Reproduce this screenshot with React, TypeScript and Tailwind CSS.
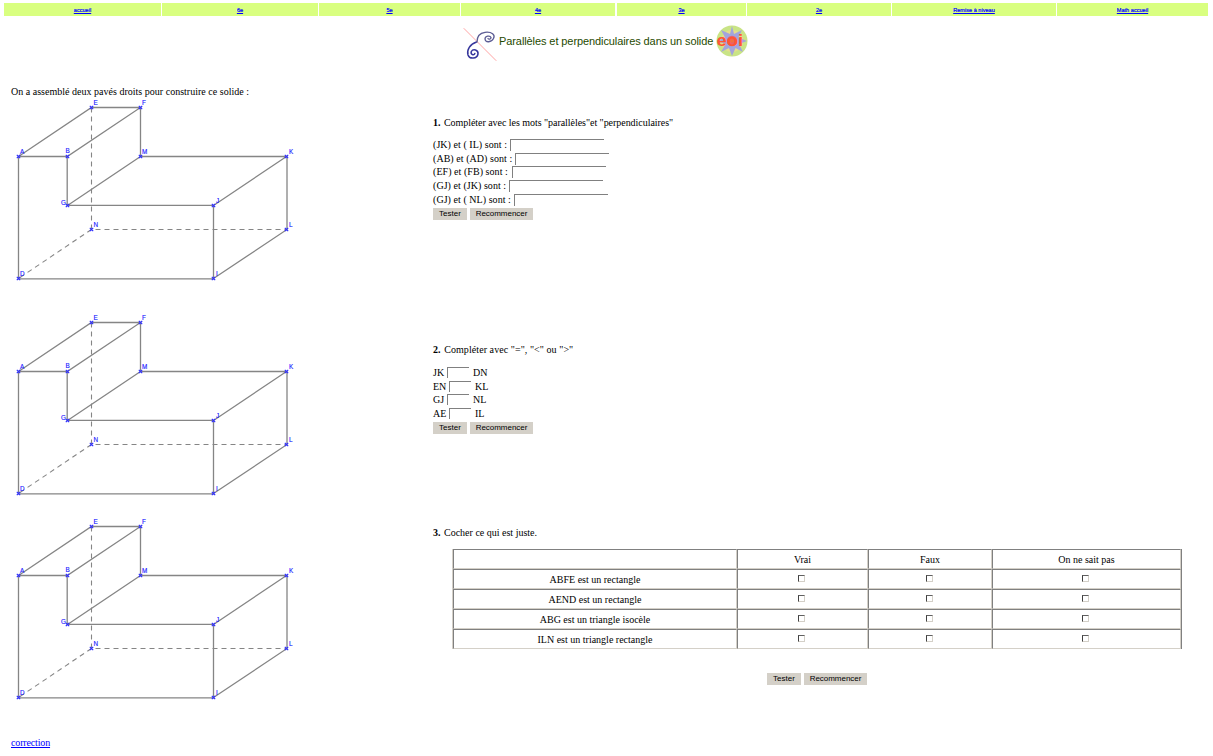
import React from "react";

type Point = { name: string; x: number; y: number; lx: number; ly: number };

const points: Point[] = [
  { name: "E", x: 91.5, y: 7.5, lx: 93.5, ly: 5 },
  { name: "F", x: 140.5, y: 7.5, lx: 142, ly: 5 },
  { name: "A", x: 18.5, y: 56.5, lx: 20, ly: 54 },
  { name: "B", x: 67.5, y: 56.5, lx: 65.5, ly: 53 },
  { name: "M", x: 140.5, y: 56.5, lx: 142, ly: 54.3 },
  { name: "K", x: 286.5, y: 56.5, lx: 289, ly: 54 },
  { name: "G", x: 67.5, y: 105.5, lx: 61, ly: 105 },
  { name: "J", x: 213.5, y: 105.5, lx: 216, ly: 103 },
  { name: "N", x: 91.5, y: 129.5, lx: 93.5, ly: 127 },
  { name: "L", x: 286.5, y: 129.5, lx: 289, ly: 127 },
  { name: "D", x: 18.5, y: 178.5, lx: 20, ly: 176 },
  { name: "I", x: 213.5, y: 178.5, lx: 216, ly: 176 },
];

function Solid() {
  return (
    <svg width="300" height="185" className="block">
      <g fill="none" stroke="#858585" strokeWidth="1.3">
        <path d="M18.5 56.5L91.5 7.5H140.5L67.2 56.5H18.5V178.8H213.5V105.4H67.2V56.5M140.5 7.5V56.5H287V129.5L213.5 178.5M67.5 105.5L140.5 56.5M213.5 105.5L286.5 56.5" />
        <path d="M91.5 7.5V129.5H286.5M91.5 129.5L18.5 178.5" strokeDasharray="5 4" strokeWidth="1.1" />
      </g>
      {points.map((p) => (
        <g key={p.name}>
          <path d={`M${p.x - 1.7} ${p.y - 1.7}l3.4 3.4m0 -3.4l-3.4 3.4`} stroke="#3030ff" strokeWidth="1.2" />
          <text x={p.lx} y={p.ly} className="fill-[#2020ff] font-['Liberation_Sans',sans-serif] text-[6.3px]" stroke="#2020ff" strokeWidth="0.15">
            {p.name}
          </text>
        </g>
      ))}
    </svg>
  );
}

function Buttons() {
  return (
    <div className="flex h-3 gap-[3px] font-['Liberation_Sans',sans-serif] text-[8px] leading-[12px]">
      <button className="h-3 w-[34px] bg-[#d4d0c8]">Tester</button>
      <button className="h-3 w-[63px] bg-[#d4d0c8] tracking-[-0.03px]">Recommencer</button>
    </div>
  );
}

function Title() {
  return (
    <div className="flex h-[38px] items-start pl-[463px]">
      <svg width="36" height="38" className="mt-[1px] block" fill="none" strokeLinecap="round">
        <path d="M1 2.5L33 34.5" stroke="#ffa3a3" strokeWidth="1" />
        <path d="M13.5 16C7 18 3.5 24 5 29C6.5 33.5 14 33 15 28C15.5 23.5 10 22.5 8.3 25.5C7.3 28.5 11 30 11.8 27.5" stroke="#36369c" strokeWidth="1.5" />
        <path d="M14 16C14 11 16 7 22 6.3C29 5.5 32.5 9 30.5 12.5C28.5 16.5 22.5 17 22 13C22 10 27 9 28 11.5C28 13.5 25.5 13.5 25 12.5" stroke="#5c5c94" strokeWidth="1.3" />
      </svg>
      <span className="mt-[10px] w-[217px] whitespace-nowrap font-['Liberation_Sans',sans-serif] text-[11px] leading-[13px] tracking-[-0.09px] text-[#1f4a00]">
        Parallèles et perpendiculaires dans un solide
      </span>
      <svg width="32" height="32" viewBox="0 0 32 32" className="block">
        <circle cx="16" cy="16" r="15.5" fill="#c9e486" />
        <circle cx="16" cy="16" r="11" fill="#e6dc8c" />
        <path d="M16 1L18 9L26 5L22.5 12.5L31 16L23 19L27 27L19.5 23L16 31L13 23L5 27L9.5 19L1 16L9 12.5L5 5L14 9Z" fill="#a3a4dc" />
        <circle cx="16" cy="16" r="5.2" fill="#e8606c" />
        <text x="0.5" y="21" textLength="26.5" lengthAdjust="spacingAndGlyphs" className="fill-[#ff5533] font-['Liberation_Sans',sans-serif] text-[17px] font-bold">eoi</text>
        <circle cx="16" cy="16" r="1.8" fill="#f2703c" />
      </svg>
    </div>
  );
}

const nav: [string, string][] = [
  ["accueil", "w-[157px]"],
  ["6e", "w-[156px]"],
  ["5e", "w-[141px]"],
  ["4e", "w-[154px]"],
  ["3e", "w-[129px] ml-px"],
  ["2e", "w-[144px]"],
  ["Remise à niveau", "w-[164px]"],
  ["Math accueil", "w-[151px]"],
];

const pairs: [string, string][] = [
  ["(JK) et ( IL) sont :", "w-[77px]"],
  ["(AB) et (AD) sont :", "w-[82px]"],
  ["(EF) et (FB) sont :", "w-[79px]"],
  ["(GJ) et (JK) sont :", "w-[76px]"],
  ["(GJ) et ( NL) sont :", "w-[81px]"],
];

const compare: [string, string, string][] = [
  ["JK", "DN", "w-[14px]"],
  ["EN", "KL", "w-[16px]"],
  ["GJ", "NL", "w-[14px]"],
  ["AE", "IL", "w-[16px]"],
];

const statements = ["ABFE est un rectangle", "AEND est un rectangle", "ABG est un triangle isocèle", "ILN est un triangle rectangle"];

const cell = "border border-t-[#808080] border-l-[#808080] border-b-[#d4d0c8] border-r-[#d4d0c8] p-0 pt-px";

export default function App() {
  return (
    <div className="flex h-[756px] w-[1213px] flex-col overflow-hidden bg-white font-['Liberation_Serif',serif] text-[10px] leading-[12px] text-black">
      <nav className="flex h-[25px] gap-px pl-1 pt-[3px] font-['Liberation_Sans',sans-serif] text-[5.6px]">
        {nav.map(([label, width]) => (
          <div key={label} className={`${width} h-[13px] bg-[#d9ff80] text-center leading-[14px]`}>
            <a href="#" className="text-[#0000ff] underline [-webkit-text-stroke:0.2px_#0000ff]">{label}</a>
          </div>
        ))}
      </nav>
      <Title />
      <main className="flex">
        <section className="w-[433px]">
          <p className="mt-[23px] h-[14px] whitespace-nowrap pl-[11px] tracking-[0.015px]">On a assemblé deux pavés droits pour construire ce solide :</p>
          <Solid />
          <div className="mt-[30px]"><Solid /></div>
          <div className="mt-[19px]"><Solid /></div>
          <a href="#" className="ml-[11px] mt-[33px] inline-block tracking-[-0.15px] text-[#0000ff] underline">correction</a>
        </section>
        <section className="w-[780px]">
          <p className="mt-[54px] h-[22px] tracking-[-0.04px]"><b className="mr-px">1.</b> Compléter avec les mots "parallèles"et "perpendiculaires"</p>
          <div className="h-[69px]">
            {pairs.map(([label, width]) => (
              <label key={label} className="flex h-[13.7px]">
                <span className={`${width} whitespace-nowrap tracking-[0.05px]`}>{label}</span>
                <input className="h-3 w-[94px] border-l border-t border-[#808080] outline-none" />
              </label>
            ))}
          </div>
          <Buttons />
          <p className="mt-[124px] h-[23px] tracking-[0.07px]"><b className="mr-px">2.</b> Compléter avec "=", "&lt;" ou "&gt;"</p>
          <div className="h-[55px]">
            {compare.map(([left, right, width]) => (
              <label key={left} className="flex h-[13.7px]">
                <span className={width}>{left}</span>
                <input className="mr-1 h-[11px] w-[22px] border-l border-t border-[#808080] outline-none" />
                <span>{right}</span>
              </label>
            ))}
          </div>
          <Buttons />
          <p className="mt-[93px] h-[22px]"><b className="mr-px">3.</b> Cocher ce qui est juste.</p>
          <table className="ml-[19px] w-[730px] table-fixed border-separate border-spacing-0 border border-b-0 border-l-[#d4d0c8] border-r-[#808080] border-t-0 text-center">
            <colgroup><col className="w-[284px]" /><col className="w-[131px]" /><col className="w-[124px]" /><col /></colgroup>
            <tbody>
              <tr className="h-5">
                <td className={cell} /><td className={cell}>Vrai</td><td className={cell}>Faux</td><td className={cell}>On ne sait pas</td>
              </tr>
              {statements.map((s) => (
                <tr key={s} className="h-5">
                  <td className={cell}>{s}</td>
                  {[0, 1, 2].map((i) => (
                    <td key={i} className={cell}>
                      <input type="checkbox" className="relative -left-px mx-auto mb-[3px] block size-[7px] appearance-none border border-b-[#d4d0c8] border-l-[#404040] border-r-[#d4d0c8] border-t-[#606060] bg-white" />
                    </td>
                  ))}
                </tr>
              ))}
            </tbody>
          </table>
          <div className="ml-[334px] mt-6"><Buttons /></div>
        </section>
      </main>
    </div>
  );
}
